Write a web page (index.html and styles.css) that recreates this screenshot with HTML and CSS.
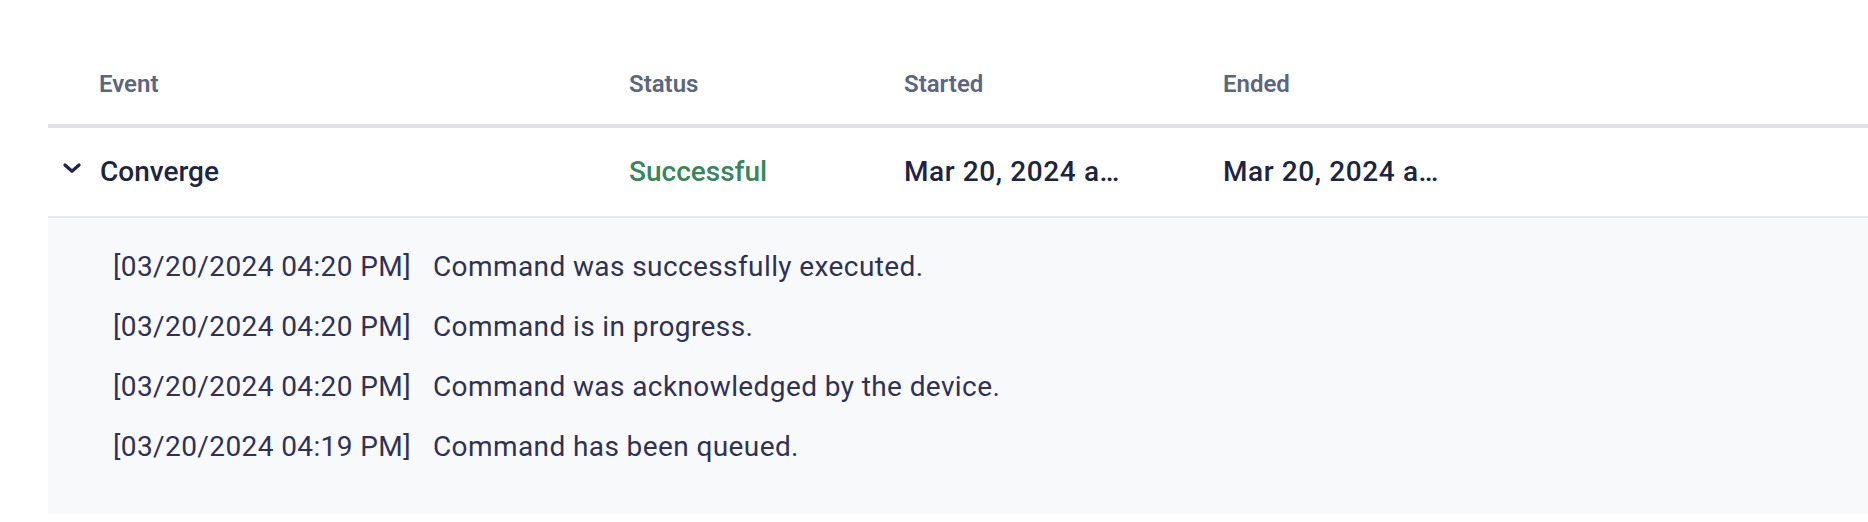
FILE: index.html
```html
<!DOCTYPE html>
<html lang="en">
<head>
<meta charset="utf-8">
<title>Command events</title>
<link rel="stylesheet" href="styles.css">
</head>
<body>
<div class="events">
  <div class="row head">
    <div class="cell event-head">Event</div>
    <div class="cell">Status</div>
    <div class="cell">Started</div>
    <div class="cell">Ended</div>
  </div>
  <div class="row item">
    <div class="cell event">
      <svg class="chev" width="18" height="10" viewBox="0 0 18 10" aria-hidden="true"><path d="M2 2 L9 8.2 L16 2" fill="none" stroke="#1c2541" stroke-width="3.2" stroke-linecap="round" stroke-linejoin="round"/></svg>
      <span>Converge</span>
    </div>
    <div class="cell status-ok">Successful</div>
    <div class="cell date" title="Mar 20, 2024 at 4:19 PM">Mar 20, 2024 a…</div>
    <div class="cell date" title="Mar 20, 2024 at 4:20 PM">Mar 20, 2024 a…</div>
  </div>
  <div class="logs">
    <div class="log"><span class="ts">[03/20/2024 04:20 PM]</span><span>Command was successfully executed.</span></div>
    <div class="log"><span class="ts">[03/20/2024 04:20 PM]</span><span>Command is in progress.</span></div>
    <div class="log"><span class="ts">[03/20/2024 04:20 PM]</span><span>Command was acknowledged by the device.</span></div>
    <div class="log"><span class="ts">[03/20/2024 04:19 PM]</span><span>Command has been queued.</span></div>
  </div>
</div>
</body>
</html>
```
FILE: styles.css
```css
html, body {
  margin: 0;
  padding: 0;
  background: #ffffff;
}
body {
  font-family: Roboto, "Noto Sans", sans-serif;
  width: 1868px;
  height: 522px;
  overflow: hidden;
}
.events {
  margin-left: 48px;
}
.row {
  display: grid;
  grid-template-columns: 581px 275px 319px 1fr;
}
.head {
  padding: 70px 0 26px;
  border-bottom: 4px solid #e0e0e5;
  font-size: 24px;
  line-height: 28px;
  font-weight: 600;
  color: #5b6680;
}
.event-head {
  padding-left: 51px;
}
.item {
  height: 88px;
  align-items: center;
  border-bottom: 2px solid #e8e8ee;
  font-size: 28px;
  line-height: 32px;
  font-weight: 500;
  color: #1c2541;
}
.event {
  display: flex;
  align-items: center;
  gap: 19px;
  padding-left: 15px;
}
.chev {
  display: block;
  margin-bottom: 8px;
}
.status-ok {
  color: #388659;
}
.date {
  white-space: nowrap;
  letter-spacing: 0.6px;
}
.logs {
  background: #f8f9fb;
  padding: 19px 0 37px 65px;
  font-size: 28px;
  line-height: 60px;
  letter-spacing: 0.4px;
  color: #2f3256;
}
.log {
  display: grid;
  grid-template-columns: 320px 1fr;
}
```
